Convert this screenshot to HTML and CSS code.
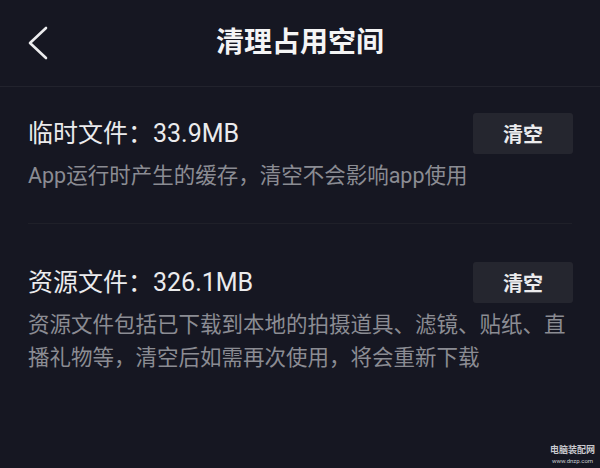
FILE: index.html
```html
<!DOCTYPE html>
<html lang="zh-CN">
<head>
  <meta charset="UTF-8" />
  <meta name="viewport" content="width=device-width, initial-scale=1.0"/>
  <title>清理占用空间</title>
  <link rel="stylesheet" href="styles.css">
</head>
<body>

<div class="page">
  <div class="header">
    <a class="back" href="#">
      <svg width="20" height="34" viewBox="0 0 20 34">
        <polyline points="18,2 2,17 18,32" fill="none" stroke="#ececee" stroke-width="2.6" stroke-linecap="round" stroke-linejoin="round"/>
      </svg>
    </a>
    <h1>清理占用空间</h1>
    <span></span>
  </div>

  <div class="item first">
    <div class="item-top">
      <div class="name">临时文件：33.9MB</div>
      <button>清空</button>
    </div>
    <div class="desc">App运行时产生的缓存，清空不会影响app使用</div>
  </div>

  <div class="divider"></div>

  <div class="item">
    <div class="item-top">
      <div class="name">资源文件：326.1MB</div>
      <button>清空</button>
    </div>
    <div class="desc">资源文件包括已下载到本地的拍摄道具、滤镜、贴纸、直播礼物等，清空后如需再次使用，将会重新下载</div>
  </div>

  <div class="watermark">
    <div class="wm-name">电脑装配网</div>
    <div class="wm-url">www.dnzp.com</div>
  </div>
</div>

</body>
</html>
```

FILE: styles.css
```css
body {
  margin: 0;
  background: #161722;
  color: #e8e8ea;
  font-family: Roboto, "Noto Sans CJK SC", sans-serif;
}

.page {
  position: relative;
  min-height: 468px;
}

/* ===== header ===== */
.header {
  display: grid;
  grid-template-columns: 1fr auto 1fr;
  align-items: center;
  height: 86px;
  border-bottom: 1px solid #22232d;
}

.back {
  justify-self: start;
  display: flex;
  margin-left: 28px;
  margin-top: -1px;
}

.header h1 {
  margin: 0;
  font-size: 28px;
  font-weight: bold;
  color: #f4f4f5;
  line-height: 36px;
}

/* ===== items ===== */
.item {
  padding: 38px 27px 30px 28px;
}

.item.first {
  padding-top: 26px;
  padding-bottom: 31px;
}

.item-top {
  display: flex;
  justify-content: space-between;
  align-items: center;
}

.name {
  font-size: 25px;
  line-height: 32px;
  color: #ebebed;
}

.desc {
  margin-top: 5px;
  font-size: 21.5px;
  line-height: 33px;
  color: #8b8c93;
}

button {
  flex: none;
  width: 100px;
  height: 41px;
  background: #25262f;
  color: #ebebed;
  border: none;
  border-radius: 3px;
  font-family: "Noto Sans CJK SC", sans-serif;
  font-size: 20px;
  font-weight: bold;
  cursor: pointer;
}

.divider {
  height: 1px;
  margin: 0 28px;
  background: #1f2029;
}

/* ===== watermark ===== */
.watermark {
  position: absolute;
  right: 5px;
  bottom: 4px;
  text-align: center;
  color: #c9cacf;
  line-height: 1;
}

.wm-name {
  font-size: 9px;
  font-weight: bold;
  margin-bottom: 3px;
}

.wm-url {
  font-size: 6px;
}
```
